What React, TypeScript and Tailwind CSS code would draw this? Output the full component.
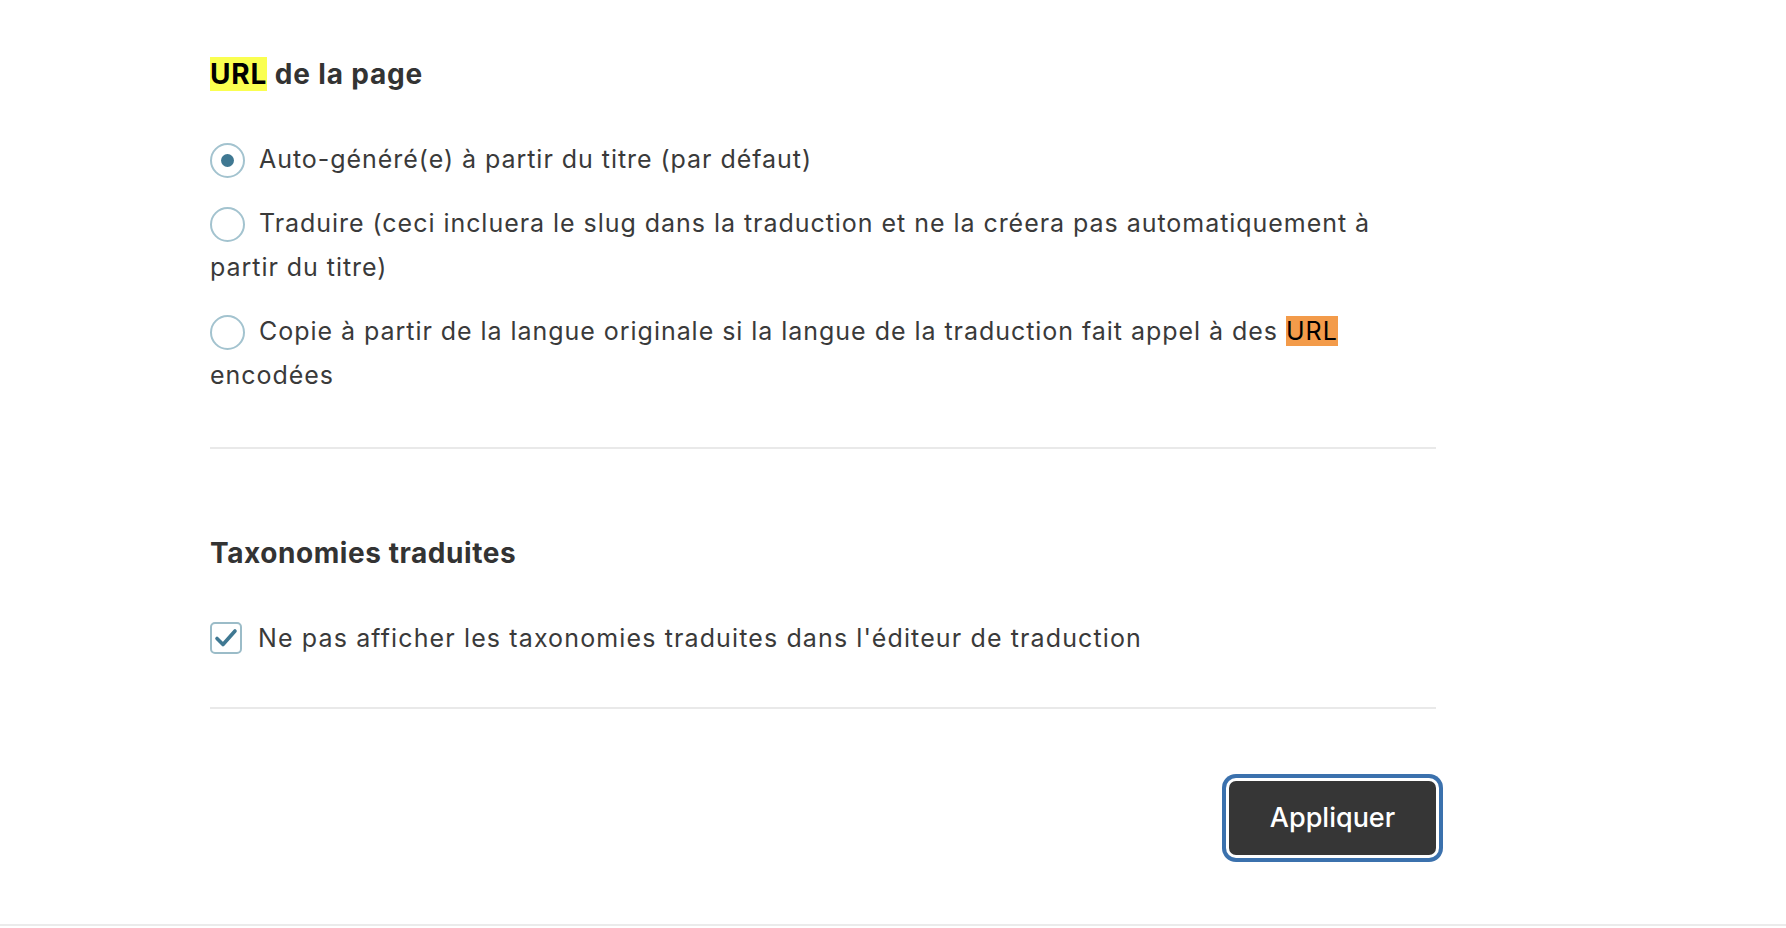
const options = [
  { label: "Auto-généré(e) à partir du titre (par défaut)", checked: true },
  {
    label:
      "Traduire (ceci incluera le slug dans la traduction et ne la créera pas automatiquement à partir du titre)",
    checked: false,
  },
];

const Radio = ({ checked }: { checked: boolean }) => (
  <span className="inline-flex items-center justify-center w-[35px] h-[35px] rounded-full border-2 border-[#a3c3cf] bg-white align-middle mr-[14px] relative -top-[1px]">
    {checked && <span className="w-[13px] h-[13px] rounded-full bg-[#3f7892]" />}
  </span>
);

export default function App() {
  return (
    <div className="min-h-[928px] bg-white font-['Inter',_'Noto_Sans',_sans-serif] text-[#3a3a3a]">
      <div className="border-b-2 border-[#ebebeb] pb-[69px]">
        <div className="ml-[210px] w-[1226px]">
          <h2 className="pt-[56px] text-[28px] leading-[36px] font-bold tracking-[0.03em] text-[#333]">
            <span className="bg-[#faff50] text-black">URL</span> de la page
          </h2>

          <div className="mt-[45px] flex flex-col gap-[20px] tracking-[0.06em]">
            {options.map((opt, i) => (
              <label key={i} className="text-[25px] leading-[44px]">
                <Radio checked={opt.checked} />
                {opt.label}
              </label>
            ))}
            <label className="text-[25px] leading-[44px]">
              <Radio checked={false} />
              Copie à partir de la langue originale si la langue de la traduction fait appel à des{" "}
              <span className="bg-[#f39b4a] text-black">URL</span> encodées
            </label>
          </div>

          <div className="mt-[50px] h-[2px] bg-[#e9e9e9]" />

          <h2 className="mt-[86px] text-[28px] leading-[36px] font-bold tracking-[0.02em] text-[#333]">
            Taxonomies traduites
          </h2>

          <label className="mt-[45px] flex items-center gap-[16px] text-[25px] leading-[44px] tracking-[0.045em]">
            <span className="w-[32px] h-[32px] rounded-[5px] border-2 border-[#9bbcc8] bg-white flex items-center justify-center shrink-0">
              <svg width="24" height="24" viewBox="0 0 24 24" fill="none">
                <path d="M3 12.5 L9 18.5 L21 5" stroke="#3f7892" strokeWidth="3.6" strokeLinecap="round" strokeLinejoin="round" />
              </svg>
            </span>
            Ne pas afficher les taxonomies traduites dans l'éditeur de traduction
          </label>

          <div className="mt-[47px] h-[2px] bg-[#e9e9e9]" />

          <div className="mt-[72px] flex justify-end">
            <button className="w-[207px] h-[74px] rounded-[7px] bg-[#363636] text-white text-[27px] font-medium ring-[4px] ring-[#3b71ad] ring-offset-[3px] ring-offset-white">
              Appliquer
            </button>
          </div>
        </div>
      </div>
    </div>
  );
}
